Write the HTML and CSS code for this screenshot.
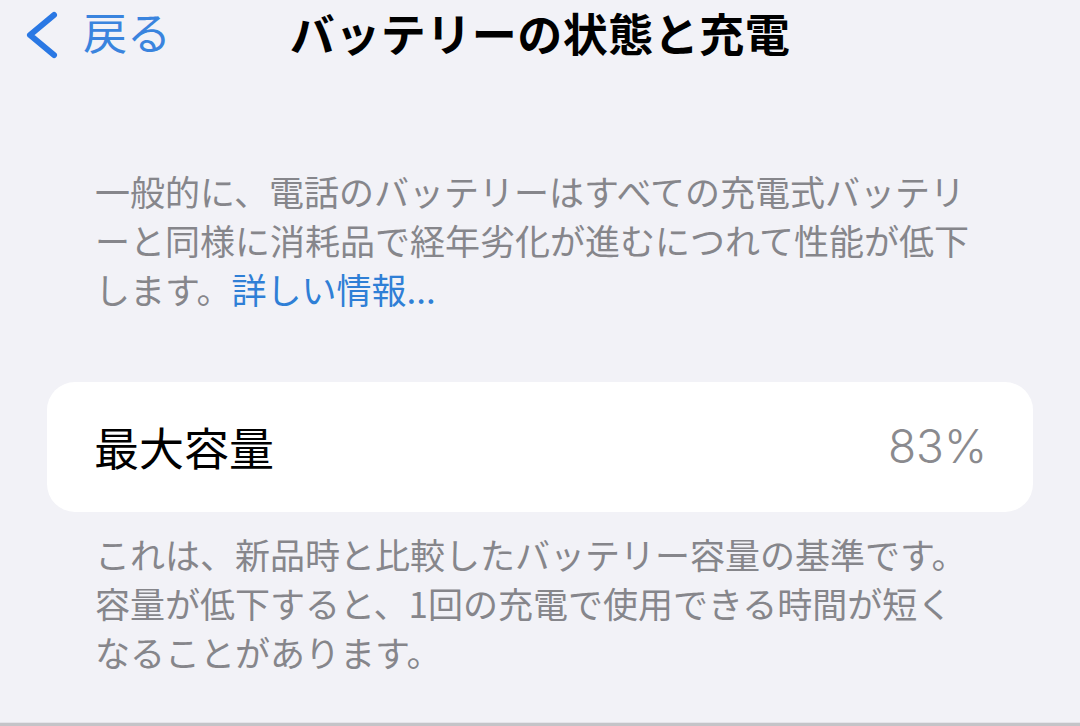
FILE: index.html
```html
<!DOCTYPE html>
<html lang="ja">
<head>
<meta charset="utf-8">
<link rel="stylesheet" href="styles.css">
</head>
<body>
<div class="page">
  <header class="nav">
    <div class="nav-left">
      <a class="back">
        <svg class="chev" viewBox="0 0 36 54" width="36" height="54"><path d="M32 7 L8 27 L32 47" fill="none" stroke="#2a78e4" stroke-width="6" stroke-linecap="round" stroke-linejoin="round"/></svg>
        <span class="back-text">戻る</span>
      </a>
    </div>
    <h1 class="title">バッテリーの状態と充電</h1>
    <div class="nav-right"></div>
  </header>

  <p class="note intro">一般的に、電話のバッテリーはすべての充電式バッテリ<br>ーと同様に消耗品で経年劣化が進むにつれて性能が低下<br>します。<a class="link">詳しい情報...</a></p>

  <section class="card">
    <span class="label">最大容量</span>
    <span class="value">83%</span>
  </section>

  <p class="note footer-note">これは、新品時と比較したバッテリー容量の基準です。<br>容量が低下すると、1回の充電で使用できる時間が短く<br>なることがあります。</p>

  <div class="bottom-bar"></div>
</div>
</body>
</html>
```

FILE: styles.css
```css
html, body {
  margin: 0;
  padding: 0;
}
body {
  background: #f2f2f7;
  font-family: "Noto Sans CJK JP", "Noto Sans", sans-serif;
  color: #000;
}
.page {
  width: 1080px;
  height: 726px;
  display: flex;
  flex-direction: column;
  overflow: hidden;
}
.nav {
  display: grid;
  grid-template-columns: 1fr auto 1fr;
  align-items: start;
  height: 66px;
}
.nav-left {
  display: flex;
  padding-left: 22px;
  padding-top: 8px;
}
.back {
  display: flex;
  align-items: flex-start;
  gap: 25px;
}
.chev {
  display: block;
}
.back-text {
  font-size: 44px;
  line-height: 1.2;
  color: #3a84de;
  margin-top: -3px;
}
.title {
  margin: 0;
  font-size: 45px;
  font-weight: 700;
  line-height: normal;
  letter-spacing: 0.5px;
}
.note {
  margin: 0;
  padding: 0 0 0 95px;
  font-size: 35px;
  line-height: 49px;
  color: #86868b;
  white-space: nowrap;
}
.intro {
  margin-top: 100px;
}
.link {
  color: #2f7fd6;
}
.card {
  margin: 69px 47px 0 47px;
  height: 130px;
  background: #fff;
  border-radius: 28px;
  display: flex;
  align-items: center;
  justify-content: space-between;
  padding: 0 46px 0 47px;
}
.label {
  font-size: 45px;
  line-height: 1.2;
  color: #000;
}
.value {
  font-family: "Inter", "Noto Sans", sans-serif;
  font-size: 46px;
  line-height: 1.2;
  color: #8a8a8e;
  font-weight: 300;
}
.footer-note {
  margin-top: 17px;
}
.bottom-bar {
  margin-top: auto;
  height: 3px;
  border-top: 1px solid #e4e4ea;
  background: #c4c4c8;
}
```
